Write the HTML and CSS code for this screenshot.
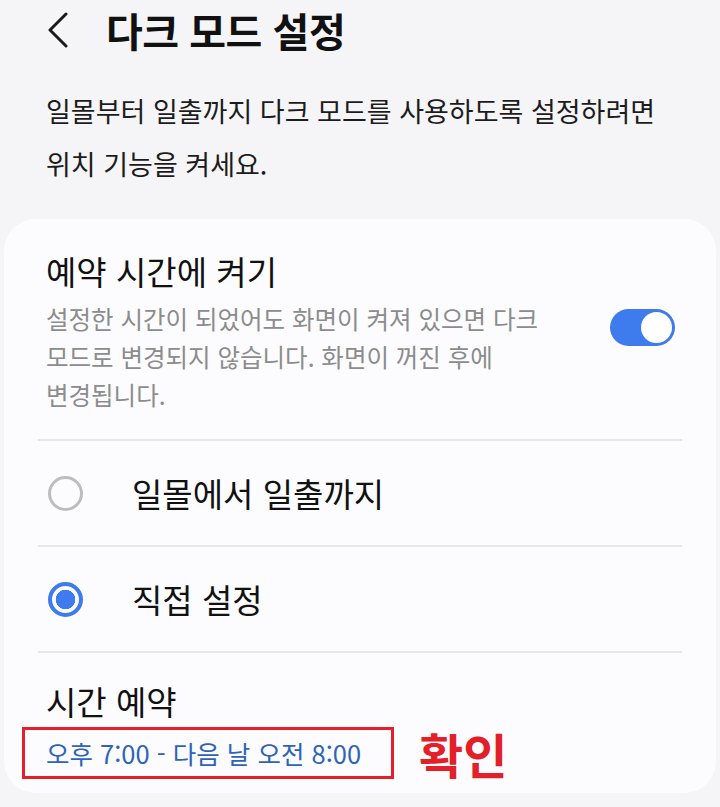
FILE: index.html
```html
<!DOCTYPE html>
<html lang="ko">
<head>
  <meta charset="UTF-8">
  <title>다크 모드 설정</title>
  <meta name="viewport" content="width=device-width, initial-scale=1.0">
  <link rel="stylesheet" href="styles.css">
</head>
<body>

  <!-- Top bar -->
  <header class="topbar">
    <button class="back-btn" aria-label="뒤로">
      <svg width="24" height="36" viewBox="0 0 24 36">
        <path d="M20 2 L4 18 L20 34" fill="none" stroke="#1a1a1a" stroke-width="3" stroke-linecap="round" stroke-linejoin="round"/>
      </svg>
    </button>
    <h1 class="title">다크 모드 설정</h1>
  </header>

  <p class="intro">일몰부터 일출까지 다크 모드를 사용하도록 설정하려면<br>위치 기능을 켜세요.</p>

  <!-- Settings card -->
  <section class="card">
    <div class="row switch-row">
      <div class="row-text">
        <div class="row-title">예약 시간에 켜기</div>
        <div class="row-sub">설정한 시간이 되었어도 화면이 켜져 있으면 다크<br>모드로 변경되지 않습니다. 화면이 꺼진 후에<br>변경됩니다.</div>
      </div>
      <span class="switch on"><span class="knob"></span></span>
    </div>

    <div class="divider"></div>

    <label class="row radio-row">
      <span class="radio"></span>
      <span class="radio-label">일몰에서 일출까지</span>
    </label>

    <div class="divider"></div>

    <label class="row radio-row">
      <span class="radio checked"></span>
      <span class="radio-label">직접 설정</span>
    </label>

    <div class="divider"></div>

    <div class="row schedule-row">
      <div class="row-title">시간 예약</div>
      <div class="schedule-line">
        <span class="schedule-box">오후 7:00 - 다음 날 오전 8:00</span>
        <span class="confirm">확인</span>
      </div>
    </div>
  </section>

</body>
</html>
```

FILE: styles.css
```css
body {
  margin: 0;
  background-color: #f5f5f7;
  font-family: "Noto Sans CJK KR", "Noto Sans", sans-serif;
  color: #111111;
}

/* Top bar */
.topbar {
  display: flex;
  align-items: center;
  height: 60px;
  padding-left: 46px;
}

.back-btn {
  display: flex;
  padding: 0;
  margin: 0;
  border: none;
  background: none;
  cursor: pointer;
}

.title {
  margin: 0 0 0 36px;
  font-size: 40px;
  font-weight: 700;
  letter-spacing: -0.5px;
}

.intro {
  margin: 24px 0 0;
  padding: 0 20px 0 46px;
  font-size: 27px;
  line-height: 53px;
  color: #1c1c1c;
}

/* Card */
.card {
  margin: 29px 4px 0;
  padding: 0 34px;
  background-color: #fcfcfe;
  border-radius: 32px;
}

.row {
  padding-left: 8px;
}

.switch-row {
  display: flex;
  align-items: flex-start;
  justify-content: space-between;
  padding-top: 32px;
  padding-bottom: 25px;
  padding-right: 7px;
}

.row-title {
  font-size: 33px;
  line-height: 40px;
}

.row-sub {
  margin-top: 9px;
  font-size: 24.5px;
  line-height: 38px;
  color: #8c8c8c;
}

.switch {
  display: flex;
  align-items: center;
  width: 65px;
  height: 37px;
  border-radius: 19px;
  background-color: #3d7bef;
  box-sizing: border-box;
  padding: 3px;
  margin-top: 58px;
}

.switch.on {
  justify-content: flex-end;
}

.knob {
  width: 31px;
  height: 31px;
  border-radius: 50%;
  background-color: #ffffff;
}

.divider {
  height: 2px;
  background-color: #e6e6e9;
}

/* Radio rows */
.radio-row {
  display: flex;
  align-items: center;
  height: 104px;
  padding-left: 10px;
  cursor: pointer;
}

.radio {
  width: 35px;
  height: 35px;
  border-radius: 50%;
  border: 3px solid #bdbdbd;
  box-sizing: border-box;
}

.radio.checked {
  border: 4px solid #3d7bef;
  background: radial-gradient(circle, #3d7bef 0 9.5px, transparent 10px);
}

.radio-label {
  margin-left: 49px;
  font-size: 33px;
}

/* Schedule */
.schedule-row {
  padding-top: 28px;
  padding-bottom: 14px;
}

.schedule-line {
  display: flex;
  align-items: center;
  margin-top: 6px;
}

.schedule-box {
  margin-left: -24px;
  padding: 0 30px 0 21px;
  height: 52px;
  line-height: 46px;
  box-sizing: border-box;
  border: 3px solid #e3202a;
  font-size: 25.5px;
  color: #2f63b8;
}

.confirm {
  margin-left: 25px;
  font-size: 48px;
  line-height: 52px;
  font-weight: 700;
  color: #e3202a;
}
```
